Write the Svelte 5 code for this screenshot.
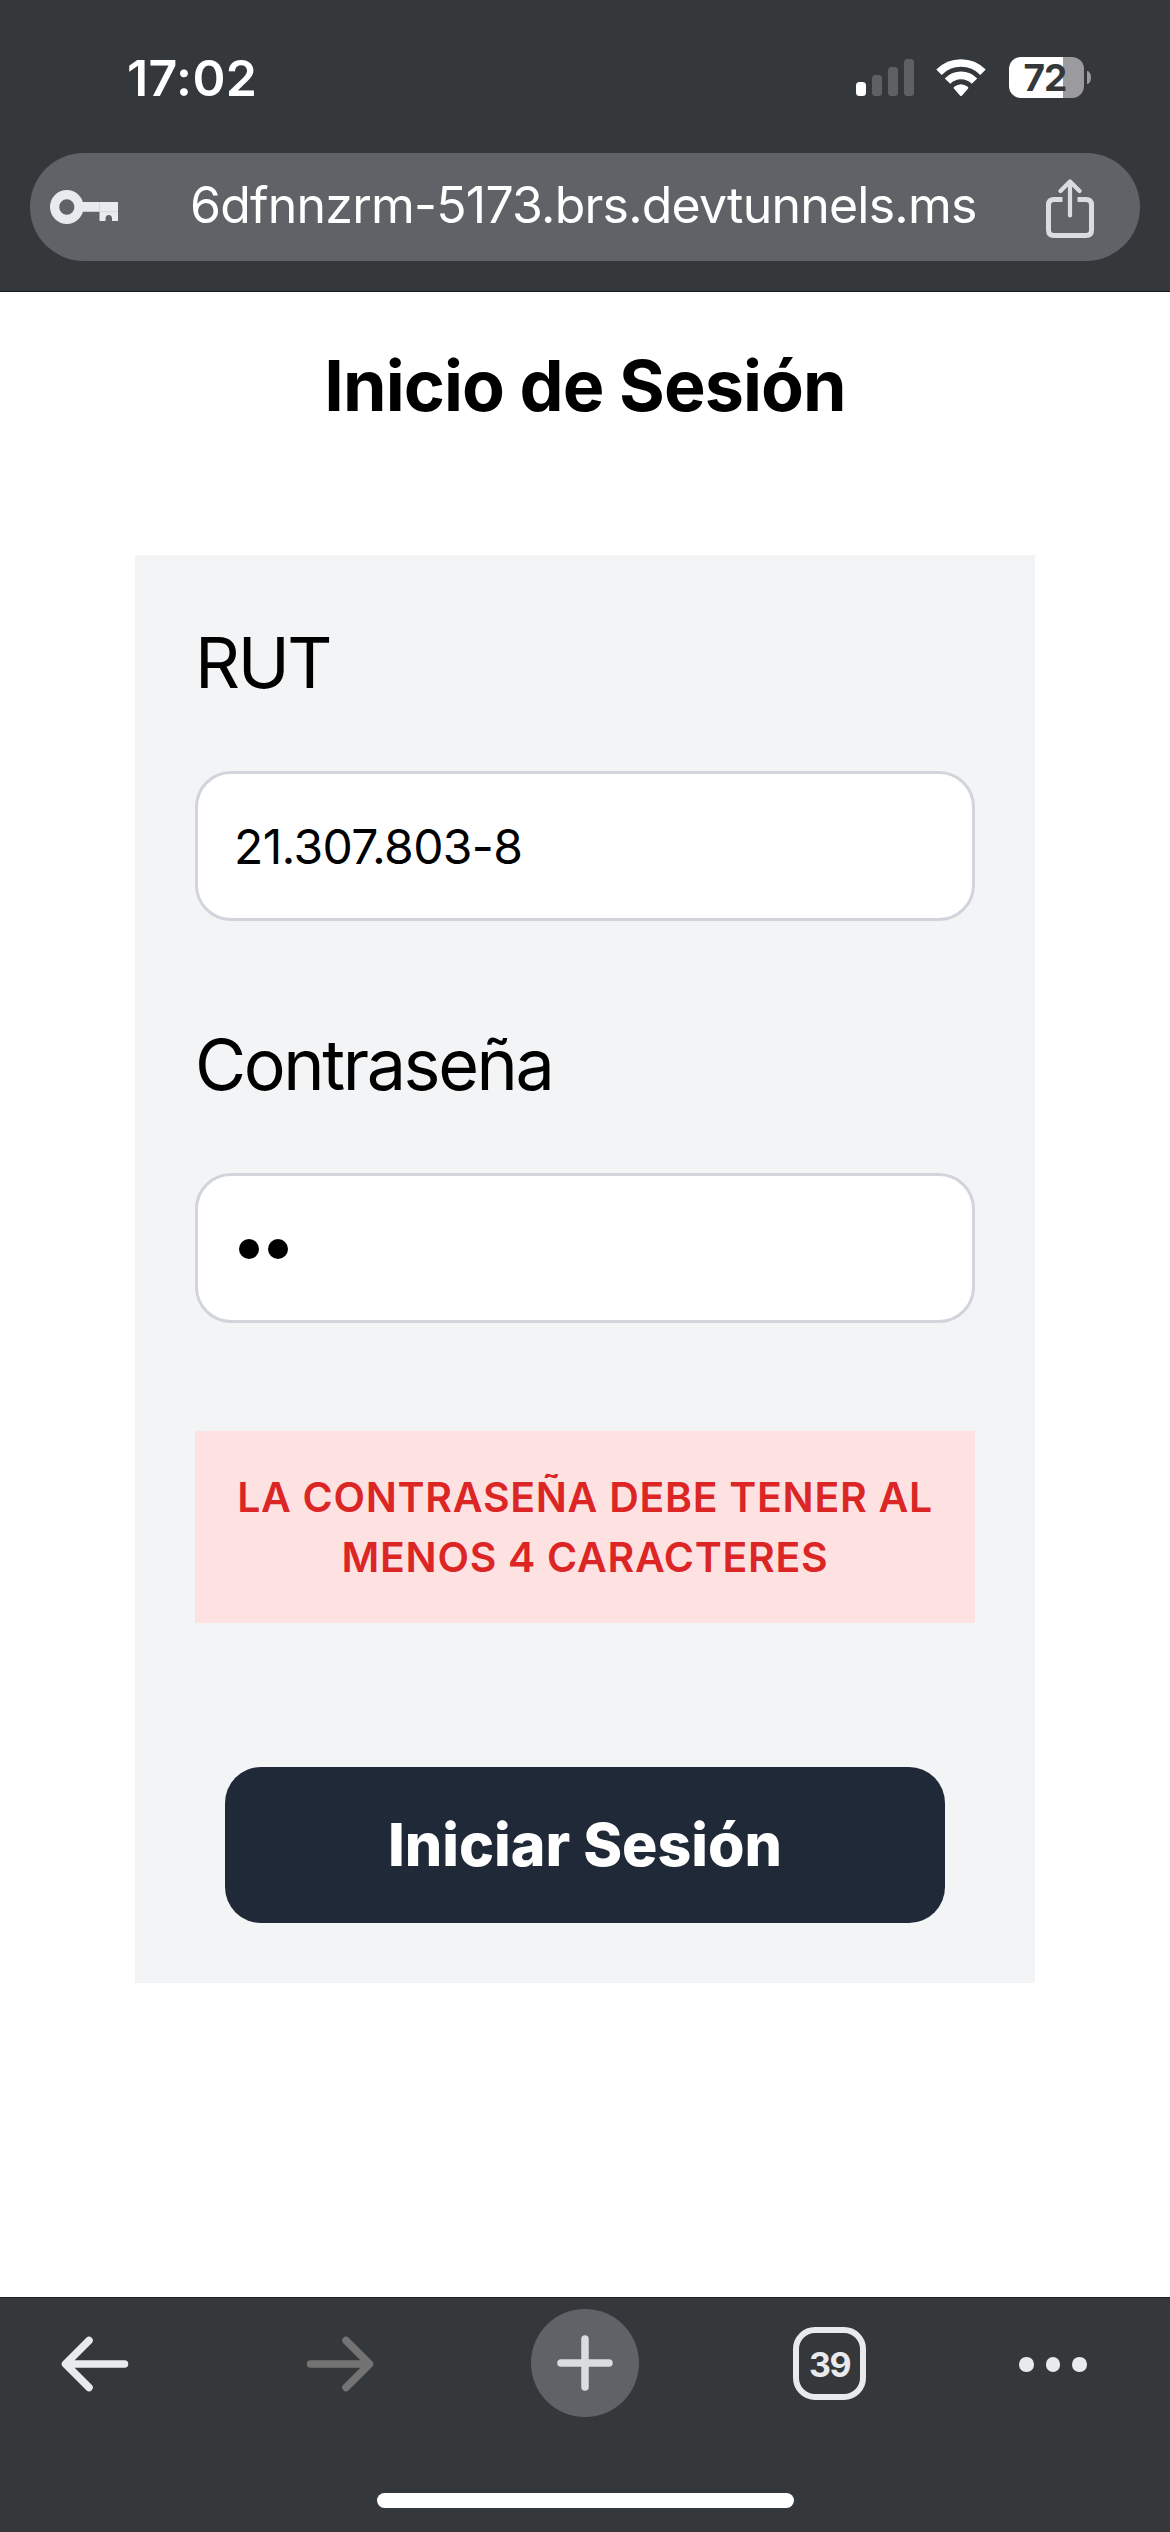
<script>
  let rut = '21.307.803-8';
  let passwordLength = 2;
  let signal = [14, 21, 29, 37];
</script>

<div class="screen">
  <header>
    <div class="status">
      <span class="time">17:02</span>
      <div class="indicators">
        <div class="signal">
          {#each signal as height, i}
            <i class:on={i === 0} style="height: {height}px"></i>
          {/each}
        </div>
        <svg class="wifi" width="52" height="38" viewBox="-26 -35 52 38">
          <g fill="none" stroke="#fff" stroke-width="7.600">
            <path d="M-22 -21.800A31 31 0 0 1 22 -21.800" />
            <path d="M-13.500 -12.900A18.700 18.700 0 0 1 13.500 -12.900" />
          </g>
          <path d="M-7 -5.300Q-7.900 -6.300 -6.800 -7.200Q0 -12.200 6.800 -7.200Q7.900 -6.300 7 -5.300L1 1.600Q0 2.600 -1 1.600Z" fill="#fff" />
        </svg>
        <div class="battery"><span>72</span></div>
        <i class="nub"></i>
      </div>
    </div>
    <div class="address">
      <svg width="68" height="36" viewBox="0 0 68 36" fill="#e8ebee">
        <path fill-rule="evenodd" d="M16.800 1a16.800 17 0 1 0 0 34a16.800 17 0 0 0 0-34zM16.800 10.200a7.600 7.800 0 1 1 0 15.600a7.600 7.800 0 0 1 0-15.600z" />
        <path d="M32 13H68V32H62V29.500Q62 26 58.800 26T55.500 29.500V32H49.500V22.700H32Z" />
        <path d="M49.500 13V22.700H68" fill="none" stroke="#c9ccd0" stroke-width="0.600" />
      </svg>
      <span class="url">6dfnnzrm-5173.brs.devtunnels.ms</span>
      <svg class="share" width="50" height="60" viewBox="0 0 50 60" fill="none" stroke="#dadce0" stroke-linecap="round" stroke-linejoin="round">
        <path d="M17.500 20.500H9Q3.500 20.500 3.500 26V51Q3.500 56.500 9 56.500H41Q46.500 56.500 46.500 51V26Q46.500 20.500 41 20.500H32.500" stroke-width="5" stroke-linecap="butt" />
        <path d="M25 36.500V3.500M15.500 12L25 2.500L34.500 12" stroke-width="4.200" />
      </svg>
    </div>
  </header>

  <main>
    <h1>Inicio de Sesión</h1>
    <section class="card">
      <div class="label">RUT</div>
      <div class="field"><span class="value">{rut}</span></div>
      <div class="label pass">Contraseña</div>
      <div class="field">
        {#each Array(passwordLength) as _}<i class="dot"></i>{/each}
      </div>
      <p class="alert">
        <span>LA CONTRASEÑA DEBE TENER AL</span>
        <span>MENOS 4 CARACTERES</span>
      </p>
      <button><span>Iniciar Sesión</span></button>
    </section>
  </main>

  <footer>
    <nav>
      <svg width="68" height="56" viewBox="0 0 68 56" fill="none" stroke="#e8eaed" stroke-width="7.500" stroke-linecap="round" stroke-linejoin="round">
        <path d="M28 4.500L4.500 28L28 51.500M5 28H63.500" />
      </svg>
      <svg class="forward" width="68" height="56" viewBox="0 0 68 56" fill="none" stroke="#737373" stroke-width="7.500" stroke-linecap="round" stroke-linejoin="round">
        <path d="M40 4.500L63.500 28L40 51.500M63 28H4.500" />
      </svg>
      <div class="add">
        <svg width="56" height="56" viewBox="0 0 56 56" stroke="#dadce0" stroke-width="7.500" stroke-linecap="round">
          <path d="M28 4V52M4 28H52" />
        </svg>
      </div>
      <div class="tabs">39</div>
      <div class="more"><i></i><i></i><i></i></div>
    </nav>
    <div class="home"></div>
  </footer>
</div>

<style>
  :global(body) {
    margin: 0;
    background: #fff;
  }
  .screen {
    width: 1170px;
    height: 2532px;
    display: flex;
    flex-direction: column;
    font-family: Inter, 'Liberation Sans', sans-serif;
    color: #000;
    background: #fff;
    overflow: hidden;
  }
  .screen * {
    box-sizing: border-box;
  }
  span {
    white-space: nowrap;
  }
  header {
    height: 292px;
    flex: none;
    background: #35383b;
    border-bottom: 1px solid #1b1c1e;
  }
  .status {
    height: 153px;
    padding: 0 79px 0 127px;
    display: flex;
    justify-content: space-between;
    align-items: flex-start;
    color: #fff;
  }
  .time {
    margin-top: 48px;
    font-size: 50px;
    line-height: 60px;
    font-weight: 600;
    letter-spacing: 0.4px;
  }
  .indicators {
    margin-top: 57px;
    height: 41px;
    display: flex;
    align-items: center;
  }
  .signal {
    display: flex;
    align-items: flex-end;
    gap: 6px;
    height: 37px;
    margin-right: 21px;
  }
  .signal i {
    width: 10px;
    border-radius: 3.5px;
    background: #5f6062;
  }
  .signal .on {
    background: #fff;
  }
  .wifi {
    margin-right: 22px;
  }
  .battery {
    width: 75px;
    height: 41px;
    border-radius: 12px;
    background: linear-gradient(90deg, #fff 54px, #9b9b9d 54px);
    color: #35383b;
    text-align: center;
    font-size: 37px;
    line-height: 42px;
    font-weight: 700;
    letter-spacing: -1px;
    padding-right: 3px;
  }
  .nub {
    width: 4px;
    height: 13px;
    margin-left: 3px;
    background: #9b9b9d;
    border-radius: 0 4px 4px 0 / 0 7px 7px 0;
  }
  .address {
    height: 108px;
    margin: 0 30px;
    padding: 0 45px 0 20px;
    border-radius: 54px;
    background: #5f6367;
    display: flex;
    align-items: center;
    color: #fff;
  }
  .url {
    font-size: 50px;
    line-height: 60px;
    letter-spacing: -0.78px;
    margin: -4px 0 0 72px;
  }
  .share {
    margin: 4px 0 0 auto;
  }
  main {
    height: 2005px;
    flex: none;
  }
  h1 {
    margin: 0;
    padding-top: 45px;
    height: 263px;
    text-align: center;
    font-size: 70px;
    line-height: 98px;
    font-weight: 700;
    letter-spacing: -0.95px;
  }
  .card {
    width: 900px;
    height: 1428px;
    margin: 0 auto;
    padding: 60px;
    background: #f3f4f6;
    display: flex;
    flex-direction: column;
  }
  .label {
    height: 96px;
    line-height: 95px;
    font-size: 70px;
    margin-bottom: 60px;
    letter-spacing: -2.4px;
  }
  .pass {
    margin-top: 96px;
  }
  .field {
    height: 150px;
    flex: none;
    border: 3px solid #d1d5db;
    border-radius: 36px;
    background: #fff;
    padding: 0 36px;
    display: flex;
    align-items: center;
    font-size: 48px;
  }
  .value {
    letter-spacing: -0.6px;
    margin-top: 1px;
  }
  .dot {
    width: 20px;
    height: 20px;
    border-radius: 50%;
    background: #000;
    margin: 2px 4px 0 5px;
  }
  .alert {
    margin: 108px 0 0;
    height: 192px;
    padding: 36px 0;
    background: #fee2e2;
    color: #dc2626;
    font-size: 41px;
    line-height: 60px;
    font-weight: 600;
    letter-spacing: 0.7px;
    display: flex;
    flex-direction: column;
    align-items: center;
  }
  button {
    margin: 144px 30px 0;
    height: 156px;
    border: 0;
    border-radius: 36px;
    background: #1f2937;
    color: #fff;
    font: 800 59px/84px Inter, sans-serif;
    letter-spacing: 0;
    padding: 0;
  }
  footer {
    height: 235px;
    flex: none;
    background: #35383b;
    border-top: 1px solid #1b1c1e;
  }
  nav {
    height: 195px;
    padding: 11px 0 0 61px;
    display: flex;
    align-items: flex-start;
  }
  nav > svg {
    margin-top: 27px;
  }
  .forward {
    margin-left: 177px;
  }
  .add {
    width: 108px;
    height: 108px;
    margin-left: 157px;
    border-radius: 50%;
    background: #5f6367;
    display: flex;
    align-items: center;
    justify-content: center;
  }
  .tabs {
    width: 73px;
    height: 73px;
    margin: 18px 0 0 154px;
    border: 6.5px solid #e8eaed;
    border-radius: 22px;
    color: #e8eaed;
    text-align: center;
    font-size: 34px;
    line-height: 63px;
    font-weight: 700;
    letter-spacing: -1.5px;
  }
  .more {
    display: flex;
    gap: 12px;
    margin: 48px 0 0 153px;
  }
  .more i {
    width: 14.5px;
    height: 14.5px;
    border-radius: 50%;
    background: #e8eaed;
  }
  .home {
    width: 417px;
    height: 15px;
    border-radius: 8px;
    background: #fff;
    margin: 0 auto;
  }
</style>
